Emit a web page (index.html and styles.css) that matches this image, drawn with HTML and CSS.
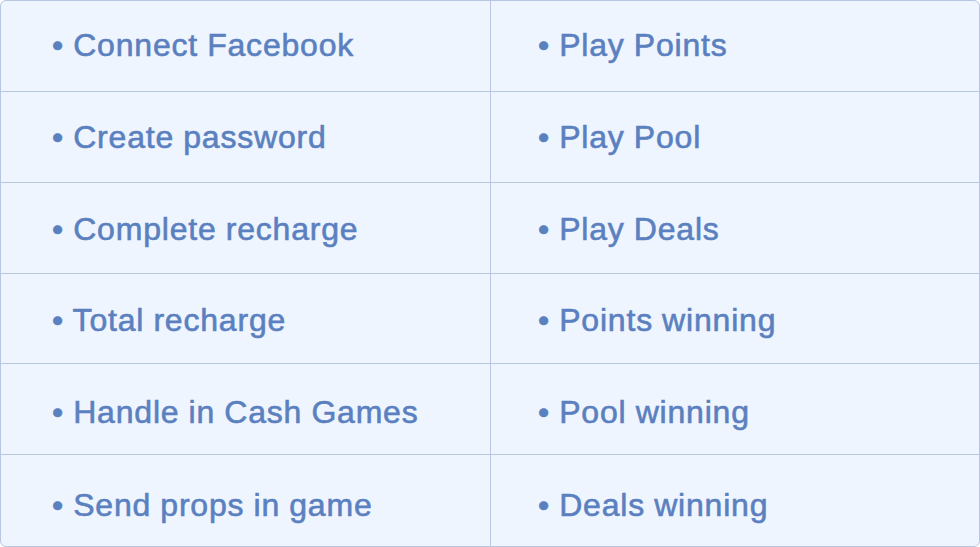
FILE: index.html
```html
<!DOCTYPE html>
<html>
<head>
<meta charset="utf-8">
<link rel="stylesheet" href="styles.css">
</head>
<body>
<div class="table">
  <div class="cell r1">• Connect Facebook</div>
  <div class="cell r1">• Play Points</div>
  <div class="cell r2">• Create password</div>
  <div class="cell r2">• Play Pool</div>
  <div class="cell r3">• Complete recharge</div>
  <div class="cell r3">• Play Deals</div>
  <div class="cell r4">• Total recharge</div>
  <div class="cell r4">• Points winning</div>
  <div class="cell r5">• Handle in Cash Games</div>
  <div class="cell r5">• Pool winning</div>
  <div class="cell r6">• Send props in game</div>
  <div class="cell r6">• Deals winning</div>
</div>
</body>
</html>
```
FILE: styles.css
```css
html, body {
  margin: 0;
  padding: 0;
  background: #ffffff;
}
.table {
  width: 980px;
  height: 547px;
  box-sizing: border-box;
  border: 1px solid #b9c6e2;
  border-radius: 6px;
  background: #eef5ff;
  display: grid;
  grid-template-columns: 490px 1fr;
  grid-template-rows: repeat(6, 1fr);
  overflow: hidden;
}
.cell {
  display: flex;
  align-items: center;
  box-sizing: border-box;
  padding-left: 51px;
  font-family: "Liberation Sans", Arial, sans-serif;
  font-size: 32px;
  letter-spacing: 0.8px;
  word-spacing: -0.5px;
  color: #5b80bf;
  border-bottom: 1px solid #b9c6e2;
  -webkit-text-stroke: 0.6px #5b80bf;
}
.cell:nth-child(odd) {
  border-right: 1px solid #b9c6e2;
}
.cell:nth-child(even) {
  padding-left: 47px;
}
.cell:nth-last-child(-n+2) {
  border-bottom: none;
}
.r2 { padding-top: 2px; }
.r3 { padding-top: 3px; }
.r4 { padding-top: 5px; }
.r5 { padding-top: 7px; }
.r6 { padding-top: 9px; }
```
